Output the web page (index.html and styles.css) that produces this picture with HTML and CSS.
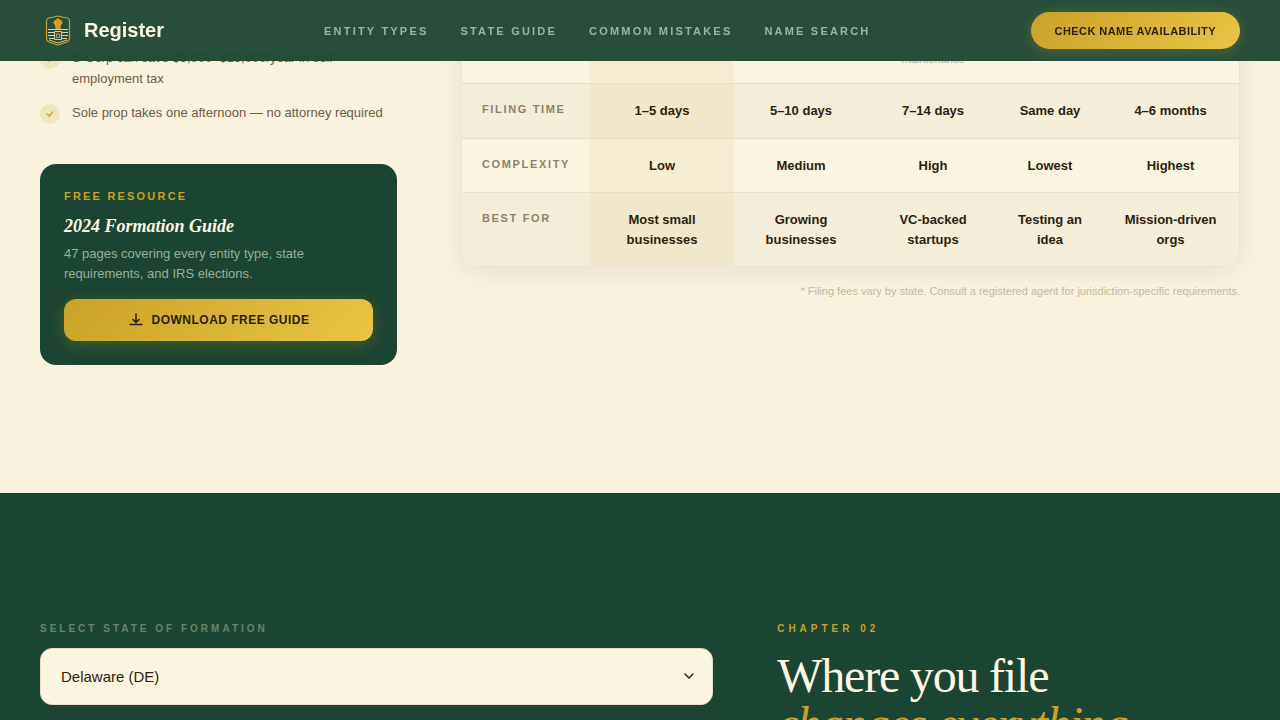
FILE: index.html
```html
<!DOCTYPE html>
<html lang="en">
<head>
  <meta charset="UTF-8" />
  <meta name="viewport" content="width=device-width, initial-scale=1" />
  <title>Register</title>
  <link rel="stylesheet" href="styles.css">
</head>
<body>
  <header class="navbar">
    <a class="brand" href="#">
      <svg class="brand-logo" viewBox="0 0 36 36" fill="none" stroke="#c9a227">
        <path d="M18 3 Q23 4.500 27.500 5 Q29.500 5.500 29.500 8 V25 Q29.500 28 27 29 L18 32 L9 29 Q6.500 28 6.500 25 V8 Q6.500 5.500 8.500 5 Q13 4.500 18 3 Z" stroke-width="1.200" />
        <path d="M18 5 L22 8 Q23.500 10 21 12 L20.500 16 H15.500 L15 12 Q12.500 10 14 8 Z" fill="#d99a26" stroke="none" />
        <path d="M8 16.500 H28 M8 19.500 H28 M8 22.500 H28 M9 25.500 H27" stroke="#cdd8b8" />
        <path d="M14.500 18.500 H21.500 V26.500 H14.500 Z" fill="#4b4c2e" stroke="#d5cc9c" />
        <path d="M16.500 21 H19.500 V24.500 H16.500 Z" stroke="#a99a68" />
        <path d="M9 27 L18 30 L27 27" stroke="#d7c477" />
      </svg>
      <span>Register</span>
    </a>
    <nav class="nav-links">
      <a href="#entities">Entity Types</a>
      <a href="#states">State Guide</a>
      <a href="#">Common Mistakes</a>
      <a href="#">Name Search</a>
    </nav>
    <button class="btn btn-nav" type="button">Check Name Availability</button>
  </header>

  <main>
    <section class="entities" id="entities">
      <aside class="sidebar">
        <ul class="checks">
          <li>
            <span class="tick"><svg viewBox="0 0 10 10"><path d="M1.500 5 L4 7.500 L8.500 2.500" /></svg></span>
            <span>S-Corp can save $5,000–$15,000/year in self-employment tax</span>
          </li>
          <li>
            <span class="tick"><svg viewBox="0 0 10 10"><path d="M1.500 5 L4 7.500 L8.500 2.500" /></svg></span>
            <span>Sole prop takes one afternoon — no attorney required</span>
          </li>
        </ul>

        <div class="resource">
          <p class="resource-label">Free Resource</p>
          <h3>2024 Formation Guide</h3>
          <p class="resource-text">47 pages covering every entity type, state requirements, and IRS elections.</p>
          <button class="btn btn-download" type="button">
            <svg viewBox="0 0 16 16"><path d="M8 2 V10 M5 7.500 L8 10.500 L11 7.500 M2 12.500 H14" /></svg>
            Download Free Guide
          </button>
        </div>
      </aside>

      <div class="compare">
        <div class="table-wrap">
          <table>
            <colgroup>
              <col class="col-label">
              <col class="col-llc">
              <col class="col-scorp">
              <col class="col-ccorp">
              <col class="col-sole">
              <col class="col-nonprofit">
            </colgroup>
            <tbody>
              <tr>
                <th></th>
                <td class="featured"></td>
                <td></td>
                <td><small>maintenance</small></td>
                <td></td>
                <td></td>
              </tr>
              <tr>
                <th scope="row">Filing Time</th>
                <td class="featured">1–5 days</td>
                <td>5–10 days</td>
                <td>7–14 days</td>
                <td>Same day</td>
                <td>4–6 months</td>
              </tr>
              <tr>
                <th scope="row">Complexity</th>
                <td class="featured">Low</td>
                <td>Medium</td>
                <td>High</td>
                <td>Lowest</td>
                <td>Highest</td>
              </tr>
              <tr>
                <th scope="row">Best For</th>
                <td class="featured">Most small businesses</td>
                <td>Growing businesses</td>
                <td>VC-backed startups</td>
                <td>Testing an idea</td>
                <td>Mission-driven orgs</td>
              </tr>
            </tbody>
          </table>
        </div>
        <p class="footnote">* Filing fees vary by state. Consult a registered agent for jurisdiction-specific requirements.</p>
      </div>
    </section>

    <section class="states" id="states">
      <div class="state-form">
        <label for="state">Select State of Formation</label>
        <div class="select-wrap">
          <select id="state">
            <option>Delaware (DE)</option>
          </select>
          <svg viewBox="0 0 16 16"><path d="M4 6 L8 10 L12 6" /></svg>
        </div>
      </div>
      <div class="state-intro">
        <p class="chapter">Chapter 02</p>
        <h2>Where you file <em>changes everything</em></h2>
      </div>
    </section>
  </main>
</body>
</html>
```

FILE: styles.css
```css
* {
  box-sizing: border-box;
  margin: 0;
  padding: 0;
}
body {
  font-family: "Liberation Sans", Arial, sans-serif;
  background-color: #f9f2df;
  color: #2c1f0e;
}
svg {
  flex-shrink: 0;
}

/* navbar */
.navbar {
  position: fixed;
  top: 0;
  left: 0;
  right: 0;
  z-index: 10;
  display: flex;
  align-items: center;
  justify-content: space-between;
  padding: 12px 40px;
  background-color: rgba(28, 68, 50, 0.95);
  backdrop-filter: blur(1px);
}
.brand {
  display: flex;
  align-items: center;
  gap: 8px;
  color: #fdf6e3;
  font-size: 20px;
  font-weight: bold;
  text-decoration: none;
}
.brand-logo {
  width: 36px;
  height: 36px;
}
.nav-links {
  display: flex;
  gap: 32px;
  line-height: 14px;
}
.nav-links a {
  color: #9db5a0;
  font-size: 11px;
  font-weight: bold;
  letter-spacing: 0.2em;
  text-transform: uppercase;
  text-decoration: none;
}
.btn {
  border: none;
  background: linear-gradient(135deg, #c9a227, #e8c547);
  color: #2c1f0e;
  font-family: inherit;
  font-weight: bold;
  letter-spacing: 0.04em;
  text-transform: uppercase;
  cursor: pointer;
}
.btn-nav {
  height: 37px;
  padding: 0 24px;
  border-radius: 19px;
  font-size: 11px;
  box-shadow: 0 2px 12px rgba(201, 162, 39, 0.3);
}

/* entity types */
.entities {
  display: grid;
  grid-template-columns: 11fr 24fr;
  gap: 64px;
  padding: 34px 40px 128px;
}
.checks {
  list-style: none;
  display: flex;
  flex-direction: column;
  gap: 13px;
  margin: 14px 0 40px;
}
.checks li {
  display: flex;
  gap: 12px;
  color: #6b5d48;
  font-size: 13px;
  line-height: 1.6;
}
.tick {
  flex-shrink: 0;
  display: flex;
  align-items: center;
  justify-content: center;
  width: 20px;
  height: 20px;
  margin-top: 1px;
  border-radius: 50%;
  background-color: #f1e5c0;
}
.tick svg {
  width: 8px;
  height: 8px;
  fill: none;
  stroke: #c9a93f;
  stroke-width: 2;
  stroke-linecap: round;
}
.resource {
  padding: 24px;
  border-radius: 16px;
  background-color: #1c4432;
}
.resource-label {
  margin-bottom: 8px;
  color: #c9a227;
  font-size: 11px;
  font-weight: bold;
  letter-spacing: 0.2em;
  line-height: 16px;
  text-transform: uppercase;
}
.resource h3 {
  margin-bottom: 4px;
  color: #fdf6e3;
  font-family: "Liberation Serif", "Times New Roman", serif;
  font-size: 18px;
  font-style: italic;
  line-height: 28px;
}
.resource-text {
  margin-bottom: 15px;
  color: #98b09c;
  font-size: 13px;
  line-height: 20px;
}
.btn-download {
  display: flex;
  align-items: center;
  justify-content: center;
  gap: 8px;
  width: 100%;
  height: 42px;
  border-radius: 12px;
  font-size: 12px;
  box-shadow: 0 4px 16px rgba(201, 162, 39, 0.25);
}
.btn-download svg {
  width: 16px;
  height: 16px;
  fill: none;
  stroke: #2c1f0e;
  stroke-width: 1.5;
  stroke-linecap: round;
}

/* comparison table */
.table-wrap {
  overflow: hidden;
  border: 1px solid #ece4da;
  border-radius: 16px;
  box-shadow: 0 4px 24px rgba(44, 31, 14, 0.08);
}
table {
  width: 100%;
  table-layout: fixed;
  border-collapse: separate;
  border-spacing: 0;
  background-color: #fbf4e0;
}
.col-label { width: 128px; }
.col-llc { width: 144px; }
.col-scorp { width: 134px; }
.col-ccorp { width: 130px; }
.col-sole { width: 104px; }
.col-nonprofit { width: 137px; }
tr:nth-child(even) {
  background-color: #f3edda;
}
th, td {
  padding: 17px 16px;
  border-bottom: 1px solid #e5decb;
  vertical-align: top;
  font-size: 13px;
  line-height: 1.5;
}
tr:last-child th,
tr:last-child td {
  border-bottom: none;
}
th {
  padding-left: 20px;
  color: #8d8269;
  font-size: 11px;
  letter-spacing: 0.15em;
  text-align: left;
  text-transform: uppercase;
  white-space: nowrap;
}
td {
  font-weight: bold;
  text-align: center;
}
td small {
  display: block;
  color: #b3a890;
  font-size: 11px;
  font-weight: normal;
  line-height: 14px;
}
.featured {
  background-color: rgba(190, 140, 60, 0.08);
}
tr:nth-child(even) .featured {
  background-color: rgba(200, 170, 60, 0.08);
}
.footnote {
  margin-top: 16px;
  color: #c3b89f;
  font-size: 11px;
  line-height: 16px;
  text-align: right;
}

/* state guide */
.states {
  display: grid;
  grid-template-columns: 16fr 11fr;
  gap: 64px;
  padding: 128px 40px;
  background-color: #1c4432;
}
.state-form label {
  display: block;
  margin-bottom: 12px;
  color: #688570;
  font-size: 10px;
  font-weight: bold;
  letter-spacing: 3px;
  line-height: 15px;
  text-transform: uppercase;
}
.select-wrap {
  position: relative;
}
.select-wrap select {
  appearance: none;
  width: 100%;
  height: 57px;
  padding: 0 20px;
  border: 1px solid #e5dcc9;
  border-radius: 12px;
  background-color: #fbf4e0;
  color: #2c1f0e;
  font-family: inherit;
  font-size: 15px;
}
.select-wrap svg {
  position: absolute;
  top: 20px;
  right: 16px;
  width: 16px;
  height: 16px;
  fill: none;
  stroke: #2c1f0e;
  stroke-width: 1.5;
  stroke-linecap: round;
  pointer-events: none;
}
.chapter {
  margin-bottom: 16px;
  color: #c9a227;
  font-size: 10px;
  font-weight: bold;
  letter-spacing: 4px;
  line-height: 15px;
  text-transform: uppercase;
}
.state-intro h2 {
  color: #fdf6e3;
  font-family: "Liberation Serif", "Times New Roman", serif;
  font-size: 48px;
  font-weight: normal;
  letter-spacing: -0.025em;
  line-height: 48px;
}
.state-intro em {
  display: block;
  color: #c9a227;
}
```
